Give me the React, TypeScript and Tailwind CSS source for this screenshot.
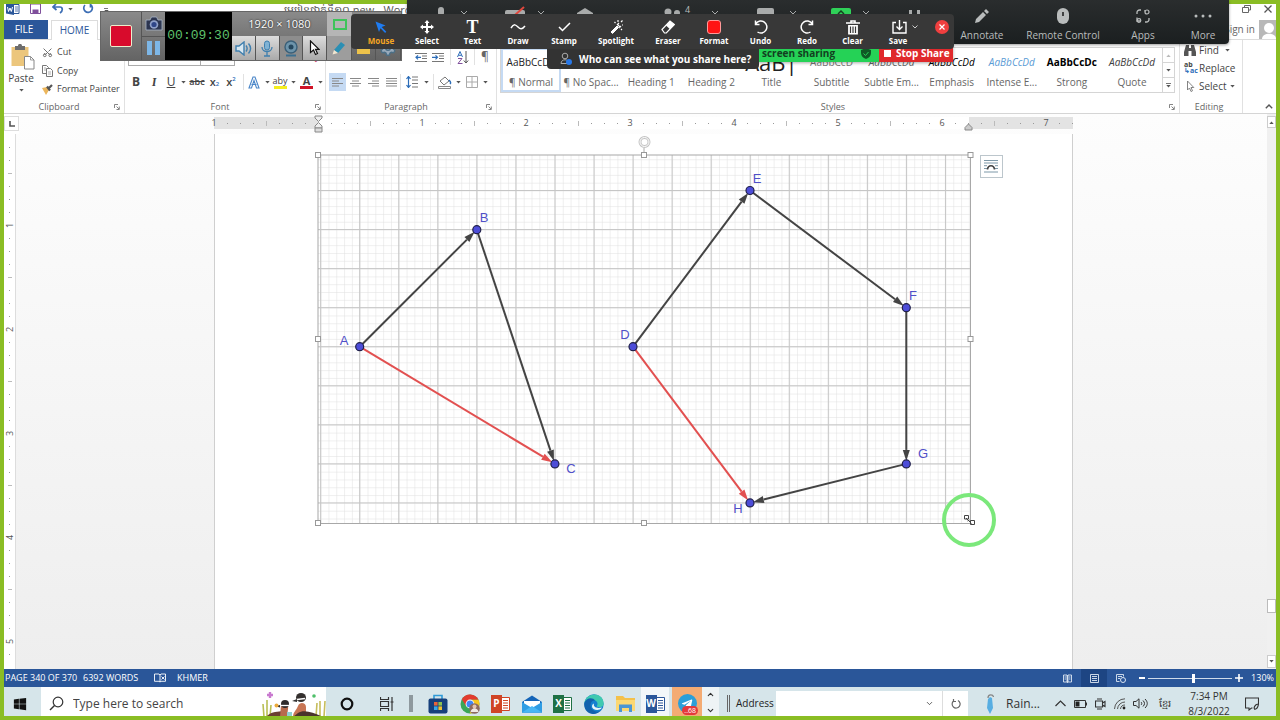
import React from "react";
import type { ReactNode } from "react";
import { FaWindows, FaTelegramPlane } from "react-icons/fa";
import { ChevronDown, ChevronUp, Scissors, Settings } from "lucide-react";

const cx = (...parts: (string | undefined)[]) => parts.filter(Boolean).join(" ");

function Icon({ w, h, vb, children, className }: { w: number; h: number; vb?: string; children: ReactNode; className?: string }) {
  return (
    <svg width={w} height={h} viewBox={vb ?? `0 0 ${w} ${h}`} fill="none" className={cx("shrink-0", className)} aria-hidden="true">
      {children}
    </svg>
  );
}

function Caret({ className }: { className?: string }) {
  return (
    <Icon w={5} h={3} className={className}>
      <path d="M0.3 0h4.4L2.5 2.6z" fill="#555" />
    </Icon>
  );
}

function Tool({ label, className, children }: { label: string; className: string; children: ReactNode }) {
  return (
    <button type="button" aria-label={label} className={cx("flex h-[18px] shrink-0 items-center justify-center", className)}>
      {children}
    </button>
  );
}

function Sep() {
  return <span className="h-4 w-px shrink-0 bg-[#e1e1e1]" />;
}

function Launcher({ label }: { label: string }) {
  return (
    <button type="button" aria-label={label} className="shrink-0">
      <Icon w={6} h={6}>
        <path d="M0.5 4V0.5H4M2.5 2.5l2.5 2.500M5.300 2.500v3H2.500" stroke="#777" strokeWidth="0.9" />
      </Icon>
    </button>
  );
}

function Group({ name, className, launcher, children }: { name: string; className: string; launcher?: boolean; children: ReactNode }) {
  return (
    <section className={cx("flex flex-col border-r border-[#e1e1e1] pt-1", className)}>
      <div className="h-0 flex-1">{children}</div>
      <div className="flex h-[13px] items-center pr-1 text-[9px] leading-[13px] text-[#666]">
        <span className="flex-1 text-center">{name}</span>
        {launcher && <Launcher label={`${name} settings`} />}
      </div>
    </section>
  );
}

/* ---------- Word window ---------- */

function TitleBar() {
  return (
    <header className="flex h-4 items-start overflow-hidden pl-[2px]">
      <Icon w={15} h={11}>
        <path d="M7 0.500h6v9H7z" fill="#fff" stroke="#2b579a" />
        <path d="M9 3h3M9 5h3M9 7h3" stroke="#2b579a" strokeWidth="0.8" />
        <path d="M0 0h8v11L0 9.500z" fill="#2b579a" />
        <path d="M1.500 3l1 4.500L4 4l1.300 3.500L6.500 3" stroke="#fff" strokeWidth="1" />
      </Icon>
      <button type="button" aria-label="Save" className="ml-[9px]">
        <Icon w={11} h={10}>
          <path d="M0.500 0h10v9.500h-10z" stroke="#80509c" />
          <path d="M2.500 5.500h6v4h-6z" fill="#80509c" />
        </Icon>
      </button>
      <button type="button" aria-label="Undo" className="ml-[11px] flex items-center gap-1">
        <Icon w={12} h={10}>
          <path d="M4 0L1 3l3.500 3M1.500 3H8c2.500 0 3.500 3.500 0 6" stroke="#3b6db4" strokeWidth="1.7" />
        </Icon>
        <Caret />
      </button>
      <button type="button" aria-label="Repeat" className="ml-[9px]">
        <Icon w={12} h={10}>
          <path d="M8.500 0.500A4.300 4.300 0 1 1 3 1M8.500 0v3.500" stroke="#3b6db4" strokeWidth="1.700" />
        </Icon>
      </button>
      <span className="ml-[10px] mt-1 flex flex-col gap-px">
        <span className="h-px w-1 bg-[#777]" />
        <Caret />
      </span>
      <h1 className="ml-[175px] shrink-0 text-[11px] leading-[12px] whitespace-nowrap text-[#555]">មេរៀនថ្នាក់ទី១០ new - Word</h1>
      <span className="flex-1" />
      <button type="button" aria-label="Restore" className="mr-[13px] mt-px">
        <Icon w={9} h={8}>
          <path d="M2.500 2V0.500h6v4.500H7M0.500 2.500h6v5h-6z" stroke="#666" />
        </Icon>
      </button>
      <button type="button" aria-label="Close" className="mr-[4px] mt-px">
        <Icon w={8} h={8}>
          <path d="M0.500 0.500l7 7M7.500 0.500l-7 7" stroke="#555" strokeWidth="1.300" />
        </Icon>
      </button>
    </header>
  );
}

function TabRow() {
  return (
    <nav className="flex h-5 items-stretch border-b border-[#dcdcdc] text-[10px]">
      <button type="button" className="w-[44px] bg-[#2b579a] pr-1 text-white">FILE</button>
      <button type="button" className="-mb-px ml-[3px] w-[47px] border-x border-t border-[#dcdcdc] bg-white text-[#2b579a]">HOME</button>
      <span className="flex-1" />
      <button type="button" className="mr-1 text-[#666]">Sign in</button>
      <Icon w={17} h={19}>
        <path d="M0 0h17v19H0z" fill="#b8b8b8" />
        <circle cx="10" cy="8" r="5" fill="#fff" />
        <path d="M3 19c0-7 14-7 14 0z" fill="#fff" />
      </Icon>
    </nav>
  );
}

function Clipboard() {
  return (
    <Group name="Clipboard" className="w-[121px] shrink-0" launcher>
      <div className="flex">
        <button type="button" className="flex w-[38px] flex-col items-center pr-1 text-[10px] leading-[14px] text-[#444]">
          <Icon w={24} h={26} className="mr-[-4px]">
            <path d="M0.500 3h17v19h-17z" fill="#ecc67c" />
            <path d="M4 2h3c0-3 4-3 4 0h3v4H4z" fill="#6d6d6d" />
            <path d="M13.500 12.500h6l3.500 3.500v9h-9.500z" fill="#fff" stroke="#888" />
            <path d="M19.500 12.500v3.500H23" stroke="#888" strokeWidth="0.800" />
          </Icon>
          <span className="mt-px">Paste</span>
          <Caret className="mt-[4px]" />
        </button>
        <div className="-mt-px flex flex-col text-[9px] text-[#444]">
          <button type="button" className="flex h-[18px] items-center gap-1">
            <Scissors size={11} color="#666" className="-rotate-90" />Cut
          </button>
          <button type="button" className="flex h-[19px] items-center gap-1">
            <Icon w={11} h={12}>
              <path d="M0.500 0.500h4l2 2v6h-6z" fill="#fff" stroke="#777" />
              <path d="M4.500 3.500h4l2 2v6h-6z" fill="#fff" stroke="#777" />
              <path d="M6 7h3M6 9h3M2 3h2M2 5h2" stroke="#999" strokeWidth="0.800" />
            </Icon>
            Copy
          </button>
          <button type="button" className="flex h-[18px] items-center gap-1 whitespace-nowrap">
            <Icon w={11} h={11}>
              <path d="M0 4l5-1 2 3-3 5z" fill="#ecb65c" />
              <path d="M5 2.500l3 4M7 4l3-3" stroke="#555" strokeWidth="2.200" />
            </Icon>
            Format Painter
          </button>
        </div>
      </div>
    </Group>
  );
}

function FontGroup() {
  return (
    <Group name="Font" className="w-[201px] shrink-0" launcher>
      <div className="mt-1 flex h-[18px] pl-[3px] text-[10px] text-[#444]">
        <select aria-label="Font name" className="w-[73px] appearance-none border border-[#ababab] bg-white pl-px leading-[14px]">
          <option>Khmer OS Siem</option>
        </select>
        <select aria-label="Font size" className="w-[34px] appearance-none border border-l-0 border-[#ababab] bg-white pl-1 leading-[14px]">
          <option>12</option>
        </select>
        <Tool label="Grow font" className="w-[18px]">A</Tool>
        <Tool label="Shrink font" className="w-[16px]">A</Tool>
        <span className="flex-1" />
        <Tool label="Clear formatting" className="w-[18px] text-[#c8466e]">◆</Tool>
      </div>
      <div className="mt-[7px] flex items-center pl-[2px] text-[12px] text-[#444]">
        <Tool label="Bold" className="w-[18px]"><b>B</b></Tool>
        <Tool label="Italic" className="w-[18px]"><i className="font-serif font-semibold">I</i></Tool>
        <Tool label="Underline" className="w-[16px]"><u>U</u></Tool>
        <Tool label="Underline style" className="w-[8px]"><Caret /></Tool>
        <Tool label="Strikethrough" className="w-[20px]"><s className="text-[9px] font-semibold">abc</s></Tool>
        <Tool label="Subscript" className="w-[15px] text-[11px] font-semibold">x<sub className="text-[6px] text-[#2b6cb8]">2</sub></Tool>
        <Tool label="Superscript" className="w-[18px] text-[11px] font-semibold">x<sup className="text-[6px] text-[#2b6cb8]">2</sup></Tool>
        <span className="w-[3px]" />
        <Sep />
        <Tool label="Text effects" className="w-[20px]">
          <Icon w={12} h={13}>
            <path d="M1 12L5 1h2l4 11H8.500L6 4.500 3.500 12zM3.500 8.500h5" stroke="#4a86c8" strokeWidth="1.100" />
          </Icon>
        </Tool>
        <Tool label="Text effect options" className="w-[6px]"><Caret /></Tool>
        <Tool label="Highlight" className="w-[20px]">
          <span className="flex flex-col items-center">
            <span className="text-[9px] leading-[10px]">aby</span>
            <span className="h-[3px] w-[13px] bg-[#f4ee1e]" />
          </span>
        </Tool>
        <Tool label="Highlight options" className="w-[7px]"><Caret /></Tool>
        <Tool label="Font colour" className="w-[19px]">
          <span className="flex flex-col items-center">
            <b className="text-[11px] leading-[10px]">A</b>
            <span className="h-[3px] w-[13px] bg-[#d01428]" />
          </span>
        </Tool>
        <Tool label="Font colour options" className="w-[8px]"><Caret /></Tool>
      </div>
    </Group>
  );
}

const alignPaths: { label: string; d: string }[] = [
  { label: "Align left", d: "M0 0.500h11M0 3h7M0 5.500h11M0 8h7" },
  { label: "Centre", d: "M0 0.500h11M2 3h7M0 5.500h11M2 8h7" },
  { label: "Align right", d: "M0 0.500h11M4 3h7M0 5.500h11M4 8h7" },
  { label: "Justify", d: "M0 0.500h11M0 3h11M0 5.500h11M0 8h11" },
];

function ParagraphGroup() {
  return (
    <Group name="Paragraph" className="w-[171px] shrink-0" launcher>
      <div className="mt-1 flex h-[18px] items-center pl-[86px]">
        <Tool label="Decrease indent" className="w-[17px]">
          <Icon w={12} h={9}>
            <path d="M0 0.500h12M7 3h5M7 5.500h5M0 8.500h12" stroke="#777" />
            <path d="M6 4.300H1M3 2.300l-2 2 2 2" stroke="#2b6cb8" strokeWidth="1.200" />
          </Icon>
        </Tool>
        <Tool label="Increase indent" className="w-[18px]">
          <Icon w={12} h={9}>
            <path d="M0 0.500h12M7 3h5M7 5.500h5M0 8.500h12" stroke="#777" />
            <path d="M0 4.300h5.500M3.500 2.300l2 2-2 2" stroke="#2b6cb8" strokeWidth="1.200" />
          </Icon>
        </Tool>
        <span className="w-[3px]" />
        <Sep />
        <Tool label="Sort" className="w-[23px]">
          <Icon w={12} h={13}>
            <path d="M0.500 6L3 0.500 5.500 6M1.500 4.300h3" stroke="#2b6cb8" />
            <path d="M1 7.500h4l-4 5h4.500" stroke="#80509c" />
            <path d="M9 0v12M6.800 9.500L9 12l2.200-2.500" stroke="#555" />
          </Icon>
        </Tool>
        <Sep />
        <Tool label="Show marks" className="w-[20px] text-[12px] text-[#666]">¶</Tool>
      </div>
      <div className="mt-[7px] flex items-center pl-[3px]">
        {alignPaths.map((a, i) => (
          <Tool key={a.label} label={a.label} className={i === 0 ? "w-[17px] bg-[#c5daf3]" : "w-[18px]"}>
            <Icon w={11} h={9}><path d={a.d} stroke="#888" /></Icon>
          </Tool>
        ))}
        <Sep />
        <Tool label="Line spacing" className="w-[22px]">
          <Icon w={12} h={12}>
            <path d="M6 1h6M6 4h6M6 7.500h6M6 11h6" stroke="#777" />
            <path d="M2.500 0.500v11M0.500 3l2-2.500 2 2.500M0.500 9l2 2.500 2-2.500" stroke="#2b6cb8" strokeWidth="1.200" />
          </Icon>
        </Tool>
        <Tool label="Line spacing options" className="w-[6px]"><Caret /></Tool>
        <span className="w-[4px]" />
        <Sep />
        <Tool label="Shading" className="w-[21px]">
          <Icon w={14} h={13}>
            <path d="M2 5l5-4 4 4-5 4z" stroke="#777" />
            <path d="M11 4c2 2 2 3 1 4" stroke="#2b6cb8" strokeWidth="1.500" />
            <path d="M0.500 10.500h12v2h-12z" stroke="#888" />
          </Icon>
        </Tool>
        <Tool label="Shading options" className="w-[6px]"><Caret /></Tool>
        <Tool label="Borders" className="w-[21px]">
          <Icon w={12} h={12}><path d="M0.500 0.500h11v11H0.500zM6 0.500v11M0.500 6h11" stroke="#aaa" /></Icon>
        </Tool>
        <Tool label="Border options" className="w-[6px]"><Caret /></Tool>
      </div>
    </Group>
  );
}

const styles: { name: string; sample?: string; cls?: string }[] = [
  { name: "¶ Normal", sample: "AaBbCcDd", cls: "text-[10px] text-[#222]" },
  { name: "¶ No Spac..." },
  { name: "Heading 1" },
  { name: "Heading 2" },
  { name: "Title", sample: "AaB|", cls: "text-[22px] text-[#222]" },
  { name: "Subtitle", sample: "AaBbCcD", cls: "text-[10px] text-[#777]" },
  { name: "Subtle Em...", sample: "AaBbCcDd", cls: "text-[10px] italic text-[#666]" },
  { name: "Emphasis", sample: "AaBbCcDd", cls: "text-[10px] italic" },
  { name: "Intense E...", sample: "AaBbCcDd", cls: "text-[10px] italic text-[#5b9bd5]" },
  { name: "Strong", sample: "AaBbCcDc", cls: "text-[10px] font-bold" },
  { name: "Quote", sample: "AaBbCcDd", cls: "text-[10px] italic text-[#404040]" },
];

function StylesGroup() {
  return (
    <Group name="Styles" className="min-w-0 flex-1" launcher>
      <div className="ml-[3px] mr-1 mt-[3px] flex h-[46px] border border-[#d5d5d5]">
        {styles.map((s, i) => (
          <button
            key={s.name}
            type="button"
            className={cx(
              "flex min-w-0 flex-1 flex-col items-center border-2 whitespace-nowrap",
              i === 0 ? "border-[#c5daf3]" : "border-transparent",
            )}
          >
            <span className={cx("flex h-[24px] items-center leading-[20px]", s.cls)}>{s.sample}</span>
            <span className="text-[10px] leading-[16px] text-[#666]">{s.name}</span>
          </button>
        ))}
        <div className="flex w-[12px] flex-col divide-y divide-[#d5d5d5] border-l border-[#d5d5d5]">
          <button type="button" aria-label="Previous styles" className="flex flex-1 items-center justify-center"><Caret className="rotate-180 opacity-40" /></button>
          <button type="button" aria-label="Next styles" className="flex flex-1 items-center justify-center"><Caret /></button>
          <button type="button" aria-label="More styles" className="flex flex-1 flex-col items-center justify-center gap-px"><span className="h-px w-[5px] bg-[#777]" /><Caret /></button>
        </div>
      </div>
    </Group>
  );
}

function EditingGroup() {
  return (
    <Group name="Editing" className="w-[63px] shrink-0">
      <div className="flex flex-col pl-1 text-[10px] text-[#444]">
        <button type="button" className="flex h-[13px] items-center gap-[3px]">
          <Icon w={12} h={11}>
            <path d="M2 0h3v3h2V0h3l2 7v4H7.500V6h-3v5H0V7z" fill="#555" />
          </Icon>
          Find <Caret className="ml-[3px]" />
        </button>
        <button type="button" className="mt-[2px] flex h-[18px] items-center gap-[3px]">
          <span className="flex w-[12px] flex-col text-left text-[7px] leading-[6px] font-bold">
            <span>ab</span>
            <span className="text-[#2b6cb8]">↳ac</span>
          </span>
          Replace
        </button>
        <button type="button" className="flex h-[18px] items-center gap-[3px]">
          <Icon w={12} h={12}><path d="M3.500 1v9l2-2 1.500 3.500 1.500-0.700L7 7.500h2.800z" stroke="#777" strokeWidth="0.900" /></Icon>
          Select <Caret />
        </button>
      </div>
    </Group>
  );
}

function Ribbon() {
  return (
    <div className="flex h-[74px] border-b border-[#d5d5d5]">
      <Clipboard />
      <FontGroup />
      <ParagraphGroup />
      <StylesGroup />
      <EditingGroup />
      <div className="flex w-[33px] shrink-0 items-end justify-end pb-[4px] pr-[3px]">
        <button type="button" aria-label="Collapse ribbon" className="flex">
          <Icon w={8} h={5}><path d="M0.800 4.200L4 1l3.200 3.200" stroke="#555" strokeWidth="1.400" /></Icon>
        </button>
      </div>
    </div>
  );
}

function HorizontalRuler() {
  const marks = Array.from({ length: 67 }, (_, i) => i - 8);
  return (
    <div className="relative flex h-[12px] w-[859px] shrink-0 bg-white">
      <div className="w-[104px] bg-[#e3e3e3]" />
      <div className="flex-1" />
      <div className="w-[104px] bg-[#e3e3e3]" />
      <div className="absolute inset-y-0 -left-[6px] flex items-center text-[9px] text-[#555]">
        {marks.map((k) => (
          <span key={k} className="flex w-[13px] justify-center">
            {k === 0 ? null : k % 8 === 0 ? Math.abs(k / 8) : <span className={k % 4 === 0 ? "h-[5px] w-px bg-[#bbb]" : "h-px w-px bg-[#999]"} />}
          </span>
        ))}
      </div>
      <Icon w={9} h={20} className="absolute left-[100px] -top-[2px]">
        <path d="M1 1h7v2L4.500 6.500 1 3z" fill="#eee" stroke="#888" />
        <path d="M1 13v-2l3.500-3.500L8 11v2z" fill="#eee" stroke="#888" />
        <path d="M1 13h7v4H1z" fill="#ddd" stroke="#888" />
      </Icon>
      <Icon w={9} h={8} className="absolute right-[100px] top-[6px]">
        <path d="M1 7V4.500L4.500 1 8 4.500V7z" fill="#ccc" stroke="#888" />
      </Icon>
    </div>
  );
}

function VerticalRuler() {
  const marks = Array.from({ length: 40 }, (_, i) => i + 2);
  return (
    <div className="flex w-[12px] flex-col items-center border-r border-[#ddd] bg-white pt-[7px] text-[9px] leading-[11px] text-[#555]">
      {marks.map((k) => (
        <span key={k} className="flex h-[13px] shrink-0 items-center">
          {k % 8 === 0 ? <span className="-rotate-90">{k / 8}</span> : <span className={k % 4 === 0 ? "h-px w-[4px] bg-[#bbb]" : "h-px w-px bg-[#999]"} />}
        </span>
      ))}
    </div>
  );
}

type Pt = { id: string; x: number; y: number; lx: number; ly: number };
const points: Record<string, Pt> = {
  A: { id: "A", x: 358.700, y: 346.700, lx: 343, ly: 344.500 },
  B: { id: "B", x: 475.800, y: 229.700, lx: 483, ly: 221.500 },
  C: { id: "C", x: 553.900, y: 463.900, lx: 570, ly: 472.500 },
  D: { id: "D", x: 632, y: 346.700, lx: 624, ly: 338.500 },
  E: { id: "E", x: 749, y: 190.500, lx: 756, ly: 182.500 },
  F: { id: "F", x: 905.300, y: 307.700, lx: 912, ly: 299.500 },
  G: { id: "G", x: 905.300, y: 463.900, lx: 922, ly: 457.500 },
  H: { id: "H", x: 749, y: 502.900, lx: 737, ly: 512.500 },
};
const vectors: [string, string, string][] = [
  ["A", "B", "#444"],
  ["B", "C", "#444"],
  ["A", "C", "#e25050"],
  ["D", "E", "#444"],
  ["E", "F", "#444"],
  ["F", "G", "#444"],
  ["G", "H", "#444"],
  ["D", "H", "#e25050"],
];

function VectorFigure() {
  const handles: [number, number][] = [
    [317, 155], [643, 155], [969.500, 155], [317, 339], [969.500, 339], [317, 523], [643, 523],
  ];
  return (
    <svg width="665" height="396" viewBox="311 134 665 396" className="shrink-0" role="img" aria-label="Vector polygons">
      <defs>
        <pattern id="minor" x="358.700" y="346.700" width="7.810" height="7.810" patternUnits="userSpaceOnUse">
          <path d="M0 0H7.810M0 0V7.810" stroke="#dfdfdf" strokeWidth="1" fill="none" />
        </pattern>
      </defs>
      <rect x="317" y="155" width="652.500" height="368.500" fill="#fff" />
      <rect x="317" y="155" width="652.500" height="368.500" fill="url(#minor)" />
      {Array.from({ length: 17 }, (_, i) => (
        <path key={`v${i}`} d={`M${319.650 + i * 39.050} 155V523`} stroke="#c6c6c6" />
      ))}
      {Array.from({ length: 9 }, (_, i) => (
        <path key={`h${i}`} d={`M317 ${190.500 + i * 39.050}H969`} stroke="#c6c6c6" />
      ))}
      <rect x="317" y="155" width="652.500" height="368.500" fill="none" stroke="#a8a8a8" />
      {vectors.map(([from, to, color]) => {
        const a = points[from];
        const b = points[to];
        const len = Math.hypot(b.x - a.x, b.y - a.y);
        const ux = (b.x - a.x) / len;
        const uy = (b.y - a.y) / len;
        const tx = b.x - ux * 3;
        const ty = b.y - uy * 3;
        const bx = tx - ux * 11;
        const by = ty - uy * 11;
        return (
          <g key={from + to}>
            <path d={`M${a.x} ${a.y}L${bx} ${by}`} stroke={color} strokeWidth="2" />
            <path d={`M${tx} ${ty}L${bx - uy * 3.500} ${by + ux * 3.500}L${bx + uy * 3.500} ${by - ux * 3.500}Z`} fill={color} />
          </g>
        );
      })}
      {Object.values(points).map((p) => (
        <g key={p.id}>
          <circle cx={p.x} cy={p.y} r="4" fill="#4d4dd8" stroke="#20204a" strokeWidth="1.200" />
          <text x={p.lx} y={p.ly} textAnchor="middle" fontSize="13" fill="#5050c8" className="font-['Liberation_Sans',sans-serif]">{p.id}</text>
        </g>
      ))}
      <circle cx="643.500" cy="142" r="4.500" fill="none" stroke="#c4c4c4" strokeWidth="3" />
      <circle cx="643.500" cy="142" r="4.500" fill="none" stroke="#fff" strokeWidth="1" />
      <path d="M643 148v5" stroke="#aaa" />
      {handles.map(([x, y]) => (
        <rect key={`${x}-${y}`} x={x - 2.500} y={y - 2.500} width="5" height="5" fill="#fff" stroke="#999" />
      ))}
    </svg>
  );
}

function DocumentArea() {
  return (
    <main className="flex min-h-0 flex-1 bg-linear-to-b from-[#fdfdfd] to-[#eeeeee]">
      <div className="flex flex-col">
        <div className="flex h-[20px] shrink-0 items-start bg-white pt-[2px]">
          <button type="button" aria-label="Tab stop" className="flex h-[15px] w-[15px] items-center justify-center border border-[#ddd] bg-white">
            <Icon w={6} h={6}><path d="M1 0v5h5" stroke="#555" strokeWidth="1.600" /></Icon>
          </button>
        </div>
        <div className="flex h-0 flex-1 overflow-hidden">
          <VerticalRuler />
        </div>
      </div>
      <div className="flex min-w-0 flex-1 flex-col">
        <div className="flex h-[20px] justify-center pt-[3px]">
          <HorizontalRuler />
        </div>
        <div className="flex flex-1 justify-center">
          <div className="relative flex w-[859px] shrink-0 items-start border-x border-[#cfcfcf] bg-white pl-[97px]">
            <VectorFigure />
            <button type="button" aria-label="Layout options" className="ml-[3px] mt-[21px] flex h-[23px] w-[23px] shrink-0 items-center justify-center border border-[#bcc6cc] bg-white">
              <Icon w={14} h={13}>
                <path d="M0 0.500h14M0 3h14M0 8.500h3M11 8.500h3M0 5.700h3M11 5.700h3M0 12h14" stroke="#7d98a8" />
                <path d="M3.500 9.500c0.500-5 6.500-5 7 0" stroke="#444" strokeWidth="1.700" />
              </Icon>
            </button>
            <div className="pointer-events-none absolute left-[727px] top-[359px]">
              <Icon w={54} h={54}>
                <circle cx="27" cy="27" r="25" stroke="#7be87b" strokeWidth="4" />
                <path d="M22.500 22.500h4v3.500h-4zM28.500 27.500h4v4h-4zM24 25l5.500 5.500M25.500 28l2-1" stroke="#444" />
              </Icon>
            </div>
          </div>
        </div>
      </div>
      <div className="flex w-[9px] flex-col items-center bg-[#f0f0f0] pt-[2px]">
        <button type="button" aria-label="Scroll up" className="flex h-[12px] w-full items-center justify-center border border-[#ccc] bg-white"><Caret className="rotate-180" /></button>
        <span className="flex-1" />
        <span className="h-[14px] w-full border border-[#bbb] bg-white" />
        <span className="h-[42px]" />
        <button type="button" aria-label="Scroll down" className="mb-px flex h-[13px] w-full items-center justify-center border border-[#ccc] bg-white"><Caret /></button>
      </div>
    </main>
  );
}

function StatusBar() {
  return (
    <footer className="flex h-[18px] shrink-0 items-center bg-[#2a5699] text-[9px] text-white">
      <span className="w-[79px] pl-px whitespace-nowrap">PAGE 340 OF 370</span>
      <span className="w-[71px] whitespace-nowrap">6392 WORDS</span>
      <Icon w={12} h={10}>
        <path d="M0.500 1h4.500l1 1v7l-1-0.700H0.500zM6 2l1-1h4.500v7.300H7L6 9M7.500 3.500l3 3M10.500 3.500l-3 3" stroke="#fff" strokeWidth="0.900" />
      </Icon>
      <span className="ml-[11px]">KHMER</span>
      <span className="flex-1" />
      <button type="button" aria-label="Read mode" className="flex w-[28px] justify-center">
        <Icon w={9} h={9}><path d="M0.500 1H4v7H0.500zM5 1h3.500v7H5zM4.500 1v8M1.500 3h1.500M1.500 5h1.500M6 3h1.500M6 5h1.500" stroke="#dce6f2" strokeWidth="0.900" /></Icon>
      </button>
      <button type="button" aria-label="Print layout" className="flex h-full w-[26px] items-center justify-center bg-[#1d4583]">
        <Icon w={9} h={9}><path d="M0.500 0.500h8v8h-8zM2 2.500h5M2 4.500h5M2 6.500h5" stroke="#dce6f2" strokeWidth="0.900" /></Icon>
      </button>
      <button type="button" aria-label="Web layout" className="flex w-[27px] justify-center">
        <Icon w={10} h={9}><path d="M0.500 0.500h7v2M0.500 0.500v7h3M2 2.500h4M2 4.500h2" stroke="#dce6f2" strokeWidth="0.900" /><circle cx="7" cy="6" r="2.500" stroke="#dce6f2" /></Icon>
      </button>
      <button type="button" aria-label="Zoom out" className="ml-[3px] flex w-[9px] justify-center"><span className="h-[2px] w-[6px] bg-white" /></button>
      <input
        type="range"
        aria-label="Zoom"
        min={0}
        max={100}
        defaultValue={54}
        className="mx-[2px] h-[10px] w-[84px] appearance-none bg-[linear-gradient(#cfdbea,#cfdbea)] bg-[length:100%_1px] bg-center bg-no-repeat [&::-webkit-slider-thumb]:h-[9px] [&::-webkit-slider-thumb]:w-[3px] [&::-webkit-slider-thumb]:appearance-none [&::-webkit-slider-thumb]:bg-white"
      />
      <button type="button" aria-label="Zoom in" className="flex w-[9px] justify-center">
        <Icon w={8} h={8}><path d="M0 4h8M4 0v8" stroke="#fff" strokeWidth="1.600" /></Icon>
      </button>
      <span className="w-[33px] pr-[2px] text-right">130%</span>
    </footer>
  );
}

/* ---------- Taskbar ---------- */

function AppButton({ label, className, children }: { label: string; className?: string; children: ReactNode }) {
  return (
    <button type="button" aria-label={label} className={cx("flex h-full shrink-0 items-center justify-center", className)}>
      {children}
    </button>
  );
}

function OfficeIcon({ letter, color }: { letter: "P" | "X" | "W"; color: string }) {
  return (
    <span className="flex items-center">
      <span className="flex h-[18px] w-[11px] items-center justify-center text-[10px] font-bold text-white" style={{ background: color }}>{letter}</span>
      <Icon w={8} h={14}>
        <path d="M0 0.500h7.500v13H0" fill="#fff" stroke={color} />
        <path d="M1 3.500h5M1 6h5M1 8.500h5M1 11h5" stroke={color} strokeWidth="1.200" />
      </Icon>
    </span>
  );
}

function Ducks() {
  return (
    <Icon w={64} h={26}>
      <path d="M2 26l-1-13M5 26V9M8 26l1-12" stroke="#b9bf55" strokeWidth="1.600" />
      <path d="M54 26l1-14M58 26V10M62 26l1-16" stroke="#c6bd5c" strokeWidth="1.600" />
      <path d="M4 26c5-6 12-5 17-6l3 6z" fill="#6a4030" />
      <path d="M19 14c4-2 8 0 7 4l-1 8h-7z" fill="#b86b4c" />
      <circle cx="23" cy="13" r="4" fill="#2e2b2b" />
      <path d="M19 14.500h8" stroke="#fff" strokeWidth="1.300" />
      <path d="M18 14l-5 1 5 1.500z" fill="#333" />
      <path d="M31 26c0-5 3-6 5-11 2-5 8-3 8 1v10z" fill="#c87554" />
      <path d="M36 22c6-4 17 0 25 4H31z" fill="#4a342c" />
      <ellipse cx="39" cy="6.500" rx="5" ry="4.500" fill="#34302e" />
      <path d="M35 8.500l8-1" stroke="#fff" strokeWidth="1.500" />
      <path d="M35 8l-5 2 5 1z" fill="#333" />
      <path d="M25 21h5v5h-5z" fill="#8ed0cf" />
      <path d="M8 1v6M5 4h6" stroke="#c97ad0" strokeWidth="2.400" />
      <circle cx="14.500" cy="14.500" r="2" fill="#eba93c" />
      <circle cx="52" cy="5" r="1.800" fill="#4fc06a" />
    </Icon>
  );
}

function Taskbar() {
  return (
    <div className="h-[29px] shrink-0 overflow-hidden bg-[#d6e5ea]">
      <div className="flex h-[33px] items-stretch text-[#333]">
        <AppButton label="Start" className="w-[37px] pr-[5px]"><FaWindows size={14} color="#111" /></AppButton>
        <label className="flex w-[285px] items-center bg-white pl-2">
          <Icon w={15} h={15}><circle cx="9" cy="6" r="4.800" stroke="#333" strokeWidth="1.200" /><path d="M5.500 9.500L1 14" stroke="#333" strokeWidth="1.400" /></Icon>
          <input aria-label="Search" placeholder="Type here to search" className="ml-[9px] w-0 min-w-0 flex-1 bg-transparent text-[12px] outline-none placeholder:text-[#444]" />
          <Ducks />
        </label>
        <AppButton label="Cortana" className="w-[42px]">
          <Icon w={14} h={14}><circle cx="7" cy="7" r="5.300" stroke="#111" strokeWidth="2.200" /></Icon>
        </AppButton>
        <AppButton label="Task view" className="w-[37px]">
          <Icon w={14} h={14}><path d="M0.500 0v2.500h8V0M0.500 14v-2.500h8V14M0.500 4.500h8v5h-8zM12 0v14M10.500 5h3" stroke="#333" strokeWidth="1.200" /></Icon>
        </AppButton>
        <span className="mx-1 h-[17px] w-[4px] self-center bg-[#8e999e]" />
        <AppButton label="Store" className="ml-[5px] w-[32px]">
          <Icon w={20} h={20}>
            <path d="M6 5V1.500h8V5" stroke="#2f9ad8" strokeWidth="1.600" />
            <rect x="0.500" y="4.500" width="19" height="15" rx="2" fill="#17407c" />
            <path d="M6 8h3.600v3.600H6z" fill="#e8653a" /><path d="M10.400 8H14v3.600h-3.600z" fill="#8cc152" />
            <path d="M6 12.400h3.600V16H6z" fill="#38a7e8" /><path d="M10.400 12.400H14V16h-3.600z" fill="#f2c230" />
          </Icon>
        </AppButton>
        <AppButton label="Chrome" className="w-[31px]">
          <Icon w={20} h={20}>
            <circle cx="10" cy="10" r="9.500" fill="#3aa757" />
            <path d="M1.800 5.200A9.500 9.500 0 0 1 18.500 5.800H10L6 12z" fill="#e33b2e" />
            <path d="M18.500 5.800A9.500 9.500 0 0 1 9.500 19.500L14 12l-2-6.200z" fill="#f8c51c" />
            <circle cx="10" cy="10" r="4.400" fill="#fff" /><circle cx="10" cy="10" r="3.500" fill="#4285f4" />
            <circle cx="14.500" cy="14.500" r="5.300" fill="#8c6a60" /><circle cx="14.500" cy="12.500" r="2" fill="#e2c5b4" /><path d="M10.500 18c1-5 7-5 8 0z" fill="#f0e8e4" />
          </Icon>
        </AppButton>
        <AppButton label="PowerPoint" className="w-[31px]"><OfficeIcon letter="P" color="#d04526" /></AppButton>
        <AppButton label="Mail" className="w-[31px]">
          <Icon w={20} h={18}>
            <path d="M0 7l10-6.500L20 7v10.500H0z" fill="#1565b8" />
            <path d="M2 6h16v6H2z" fill="#fff" />
            <path d="M0 7l10 6 10-6v10.500H0z" fill="#2f9de4" /><path d="M0 17.500l10-6.500 10 6.500z" fill="#48b6f4" />
          </Icon>
        </AppButton>
        <AppButton label="Excel" className="w-[31px]"><OfficeIcon letter="X" color="#1f7145" /></AppButton>
        <AppButton label="Edge" className="w-[32px]">
          <Icon w={20} h={20}>
            <circle cx="10" cy="10" r="9.700" fill="#1580cf" />
            <path d="M0.300 9C2-2.500 19.500-2.500 19.700 9.500c0 4-5 4.500-7 3 3-5-3-8.500-7-6C3 8 1 9 0.300 9z" fill="#3fc9b0" />
            <path d="M0.300 9C2 3.500 9 3 11 6.500c-5 0-6 6-2 9.500 3 2.500 6 2 8.500 0C10 24-1 19 0.300 9z" fill="#1262ad" />
            <path d="M10 9.500c-1 3 2 5.500 8 4-2 3-6 3-8.500 1.500-2-1.500-2-4.500 0.500-5.500z" fill="#e8f5fa" />
          </Icon>
        </AppButton>
        <AppButton label="File Explorer" className="w-[31px]">
          <Icon w={19} h={17}>
            <path d="M0 1h7l2 2h10v13H0z" fill="#f4c14a" /><path d="M0 5h19v11H0z" fill="#fbd873" />
            <path d="M3 17V9.500h13V17h-3v-4H6v4z" fill="#4a96d4" />
          </Icon>
        </AppButton>
        <AppButton label="Word" className="w-[28px] bg-[#f2f7f9]"><OfficeIcon letter="W" color="#2b579a" /></AppButton>
        <AppButton label="Telegram" className="relative ml-[3px] w-[30px] bg-[#f4ab73]">
          <span className="flex h-[19px] w-[19px] items-center justify-center rounded-full bg-[#2b9fd9]"><FaTelegramPlane size={12} color="#fff" /></span>
          <span className="absolute bottom-[5px] right-1 rounded-full bg-[#e5393b] px-[2px] text-[7px] leading-[9px] text-white">..68</span>
        </AppButton>
        <div className="flex w-[17px] flex-col items-center justify-between bg-[#eef3f5] pt-[3px] pb-[5px]">
          <button type="button" aria-label="Previous apps"><ChevronUp size={9} strokeWidth={3} /></button>
          <button type="button" aria-label="Next apps"><ChevronDown size={9} strokeWidth={3} /></button>
        </div>
        <span className="ml-[8px] h-[17px] w-[3px] self-center border-x border-[#666]" />
        <label htmlFor="address" className="ml-[6px] w-[40px] self-center text-[10px] text-[#222]">Address</label>
        <div className="mt-1 flex w-[192px] items-center bg-white">
          <input id="address" className="w-0 min-w-0 flex-1 bg-transparent outline-none" />
          <button type="button" aria-label="Address history" className="flex h-full w-[26px] items-center justify-center border-r border-[#ddd] pb-1"><ChevronDown size={9} /></button>
          <button type="button" aria-label="Refresh" className="flex h-full w-[25px] items-center justify-center pb-1">
            <Icon w={10} h={10}><path d="M7 1.500A4 4 0 1 1 2.500 2M2.500 0v2.500H5" stroke="#666" strokeWidth="1.200" /></Icon>
          </button>
        </div>
        <span className="flex-1" />
        <button type="button" className="flex items-center gap-[12px] text-[12px]">
          <Icon w={8} h={20}>
            <path d="M4 3v17l3-6-1-10zM4 3v17L1 14 2 5z" fill="#58aee2" />
            <path d="M2 4c0-4 5-4 5.500-1" stroke="#888" strokeWidth="1.300" />
          </Icon>
          Rain...
        </button>
        <div className="ml-[10px] flex items-center">
          <button type="button" aria-label="Hidden icons" className="flex w-[20px] justify-center"><Icon w={11} h={7}><path d="M0.500 6l5-5 5 5" stroke="#333" strokeWidth="1.200" /></Icon></button>
          <button type="button" aria-label="Battery" className="flex w-[20px] justify-center"><Icon w={13} h={8}><path d="M0.500 0.500h11v7H0.500zM12.500 2.500v3" stroke="#333" /><path d="M1.500 1.500h4v5h-4z" fill="#222" /></Icon></button>
          <button type="button" aria-label="Meet now" className="flex w-[20px] justify-center"><Icon w={11} h={12}><path d="M2 1h5M2 11h5M0.500 3h7v6h-7zM7.500 5l2.500-1.500v5L7.500 7" stroke="#333" strokeWidth="1.100" /></Icon></button>
          <button type="button" aria-label="Network" className="flex w-[20px] justify-center"><Icon w={12} h={12}><path d="M0.500 11A10.500 10.500 0 0 1 11 0.800M3.500 11A7.500 7.500 0 0 1 11 4M6.500 11A4.500 4.500 0 0 1 11 7" stroke="#555" /><circle cx="10" cy="10" r="1.400" fill="#222" /></Icon></button>
          <button type="button" aria-label="Volume" className="flex w-[20px] justify-center"><Icon w={15} h={11}><path d="M0.500 3.500H3L6 0.800v9.400L3 7.500H0.500zM8 4c1 1 1 2 0 3M10 2.500c2 2 2 4 0 6M12 1c3 3 3 6 0 9" stroke="#333" /></Icon></button>
          <button type="button" className="w-[30px] text-center text-[10px]">ខ្មែរ</button>
        </div>
        <button type="button" className="ml-[3px] w-[52px] text-center text-[10px] leading-[15px]">7:34 PM<br />8/3/2022</button>
        <AppButton label="Notifications" className="ml-[4px] w-[37px] pr-3">
          <Icon w={14} h={14}><path d="M13.500 6V1H0.500v10H4v2l2.500-2h1M13.500 6c0 4-2 6-4 6.500M10 12.500c-2-1.500 0-5 3-5.500" stroke="#333" strokeWidth="1.100" /></Icon>
        </AppButton>
      </div>
    </div>
  );
}

/* ---------- Floating toolbars ---------- */

function Recorder() {
  const cell = "flex items-center justify-center border-r border-[#555] h-full flex-1";
  return (
    <div className="absolute left-[100px] top-[11px] flex h-[50px] border border-[#666] bg-linear-to-b from-[#8a8a8a] to-[#646464]">
      <button type="button" aria-label="Stop recording" className="flex w-[41px] items-center justify-center border-r border-[#555]">
        <span className="h-[22px] w-[22px] rounded-[2px] border border-[#eec] bg-[#d80b2c]" />
      </button>
      <div className="flex w-[23px] flex-col">
        <button type="button" aria-label="Snapshot" className="flex flex-1 items-center justify-center border-b border-[#555]">
          <Icon w={18} h={15}>
            <path d="M1 4h4l1.500-3h5L13 4h4v10H1z" fill="#2c3550" stroke="#aab6c8" strokeWidth="0.800" />
            <circle cx="9" cy="8.500" r="4.300" fill="#8fa0c8" /><circle cx="9" cy="8.500" r="2.600" fill="#2f4688" />
          </Icon>
        </button>
        <button type="button" aria-label="Pause" className="flex flex-1 items-center justify-center gap-[3px]">
          <span className="h-[14px] w-[5px] bg-[#7db6e6]" />
          <span className="h-[14px] w-[5px] bg-[#7db6e6]" />
        </button>
      </div>
      <div className="flex w-[67px] items-center justify-center bg-black font-['Liberation_Mono',monospace] text-[13px] text-[#5fc26d]">00:09:30</div>
      <div className="flex w-[95px] flex-col">
        <div className="flex h-[24px] items-center justify-center text-[11px] text-white [text-shadow:0_0_2px_#000]">1920 × 1080</div>
        <div className="flex h-[24px] bg-linear-to-b from-[#ddd] to-[#aaa]">
          <button type="button" aria-label="Speaker" className={cell}><Icon w={17} h={15}><path d="M1 5h3l5-4v13L4 10H1z" stroke="#3f7fae" strokeWidth="1.400" fill="#d8e8f2" /><path d="M11 4.500c1.500 2 1.500 4 0 6M13.500 2.500c2.500 3 2.500 7 0 10" stroke="#3f7fae" strokeWidth="1.400" /></Icon></button>
          <button type="button" aria-label="Microphone" className={cell}><Icon w={12} h={17}><rect x="3.500" y="1" width="5" height="9" rx="2.500" fill="#7fb2d4" stroke="#3f7fae" /><path d="M1 7c0 6 10 6 10 0M6 12v4M3 16h6" stroke="#3f7fae" strokeWidth="1.300" /></Icon></button>
          <button type="button" aria-label="Webcam" className={cx(cell, "bg-[#8d8d8d]")}><Icon w={16} h={17}><circle cx="8" cy="7" r="6" fill="#6d94ab" stroke="#3a5f78" strokeWidth="1.400" /><circle cx="8" cy="7" r="2.500" fill="#24475e" /><path d="M3 15.500h10" stroke="#3a6f90" strokeWidth="2" /></Icon></button>
          <button type="button" aria-label="Pointer" className={cell}><Icon w={11} h={16}><path d="M1.500 1v11.500l3-2.500 2 4.500 2-1-2-4.200h3.500z" fill="#fff" stroke="#111" strokeWidth="1.200" /></Icon></button>
        </div>
      </div>
      <div className="flex w-[74px] flex-col">
        <button type="button" aria-label="Capture area" className="flex h-[24px] w-[25px] items-center justify-center bg-[#b5b5b5]"><span className="h-[11px] w-[14px] border-2 border-[#3ec45a]" /></button>
        <div className="flex h-[24px]">
          <button type="button" aria-label="Pencil" className={cx(cell, "bg-[#9d9d9d]")}><Icon w={16} h={16}><path d="M3 10l7-8 4 3-7 8z" fill="#2a8fb4" /><path d="M3 10l-1.500 4.500L7 13z" fill="#f0e6d0" /></Icon></button>
          <button type="button" aria-label="Folder" className={cell}><Icon w={16} h={14}><path d="M1 1h6l1 2h6v10H1z" fill="#edc24a" /></Icon></button>
          <button type="button" aria-label="Settings" className={cell}><Settings size={18} color="#4c6f86" fill="#9ab" /></button>
        </div>
      </div>
    </div>
  );
}

function MeetingBar() {
  const item = "flex flex-col items-center justify-center gap-[4px] pt-[6px]";
  return (
    <div className="absolute left-[407px] right-[51px] top-0 flex h-[44px] rounded-br-[4px] bg-linear-to-b from-[#2a2d2e] to-[#1b1f20] text-[10px] text-[#b9bcbc] shadow-[0_1px_3px_#0006]">
      <Icon w={540} h={16} className="mr-auto">
        <g fill="#a9abab">
          <rect x="31" y="7" width="6" height="9" rx="3" />
          <rect x="98" y="10" width="20" height="6" rx="2" />
          <path d="M170 13l8-5 8 5v3h-16z" />
          <circle cx="261" cy="12" r="3.500" /><circle cx="270" cy="13" r="3" />
          <rect x="350" y="8" width="17" height="8" rx="2" />
          <rect x="502" y="10" width="3" height="6" /><rect x="510" y="10" width="3" height="6" />
        </g>
        <rect x="424" y="8" width="20" height="8" rx="2" fill="#2fd158" />
        <path d="M431 14l3-3 3 3" stroke="#14401f" strokeWidth="1.500" />
        <path d="M108 15l9-8" stroke="#e0483e" strokeWidth="2" />
        <path d="M54 11l3 3 3-3M131 11l3 3 3-3M305 11l3 3 3-3M383 11l3 3 3-3M456 11l3 3 3-3" stroke="#a9abab" />
        <text x="278" y="13" fontSize="9" fill="#b9bcbc">4</text>
      </Icon>
      <button type="button" className={cx(item, "w-[70px]")}>
        <Icon w={16} h={16}><path d="M1 15l1-4 7-7 3 3-7 7zM10 3l2-2 3 3-2 2z" fill="#b9bcbc" /></Icon>Annotate
      </button>
      <button type="button" className={cx(item, "w-[92px] whitespace-nowrap")}>
        <Icon w={12} h={16}><rect width="12" height="16" rx="6" fill="#b9bcbc" /><path d="M6 4v4" stroke="#222" strokeWidth="1.600" /></Icon>Remote Control
      </button>
      <button type="button" className={cx(item, "w-[68px]")}>
        <Icon w={14} h={16}><path d="M5 2H3.500A2.500 2.500 0 0 0 1 4.500V6M13 10v1.500A2.500 2.500 0 0 1 10.500 14H9M1 9.500V13h4M9 2v1.500" stroke="#b9bcbc" strokeWidth="1.300" /><circle cx="11" cy="4" r="2" stroke="#b9bcbc" strokeWidth="1.200" /><circle cx="3" cy="12.500" r="1.800" stroke="#b9bcbc" strokeWidth="1.200" /></Icon>Apps
      </button>
      <button type="button" className={cx(item, "w-[52px]")}>
        <Icon w={18} h={16}><circle cx="2" cy="8" r="1.500" fill="#b9bcbc" /><circle cx="9" cy="8" r="1.500" fill="#b9bcbc" /><circle cx="16" cy="8" r="1.500" fill="#b9bcbc" /></Icon>More
      </button>
    </div>
  );
}

function ShareBar() {
  return (
    <div className="absolute left-[740px] top-[44px] flex h-[18px] w-[213px] text-[10px] leading-[18px] font-bold shadow-[0_1px_3px_#0005]">
      <div className="flex w-[139px] items-center bg-[#25d256] pl-[22px] text-[#12401f]">
        <span className="whitespace-nowrap">screen sharing</span>
        <Icon w={10} h={11} className="ml-auto mr-2"><path d="M5 0l5 2v3c0 3-2 5-5 6-3-1-5-3-5-6V2z" fill="#0f5a25" /><path d="M2.500 5.500l2 2 3-3.500" stroke="#25d256" /></Icon>
      </div>
      <button type="button" className="flex flex-1 items-center gap-[5px] bg-[#e0292c] pl-[5px] whitespace-nowrap text-white">
        <span className="h-[7px] w-[7px] bg-white" />Stop Share
      </button>
    </div>
  );
}

const annotateTools: { label: string; w: string; icon: ReactNode }[] = [
  { label: "Mouse", w: "w-[46px]", icon: <Icon w={12} h={12}><path d="M0.500 0.500l10 4-3.800 1.600 4.600 4.600-1.200 1.200-4.600-4.600L4 11z" fill="#1f7cf2" /></Icon> },
  { label: "Select", w: "w-[46px]", icon: <Icon w={14} h={14}><path d="M7 0l2.500 3H8v3h3V4.500L14 7l-3 2.500V8H8v3h1.500L7 14l-2.500-3H6V8H3v1.500L0 7l3-2.500V6h3V3H4.500z" fill="#fff" /></Icon> },
  { label: "Text", w: "w-[45px]", icon: <span className="font-['Liberation_Serif',serif] text-[18px] leading-[14px] font-bold">T</span> },
  { label: "Draw", w: "w-[46px]", icon: <Icon w={16} h={8}><path d="M1 5c3-5 5-3 7-1s4 3 7-1" stroke="#fff" strokeWidth="1.500" /></Icon> },
  { label: "Stamp", w: "w-[46px]", icon: <Icon w={13} h={10}><path d="M1 5l3.500 3.500L12 1" stroke="#fff" strokeWidth="1.500" /></Icon> },
  { label: "Spotlight", w: "w-[58px]", icon: <Icon w={13} h={14}><path d="M1 12l6-6 1.500 1.500-6 6z" fill="#fff" stroke="#fff" /><path d="M7 5l2-2M9 8l2-2M7.500 4.500l2.500 2.500M8 0v2M12 5h1M11 2l1.500-1.500M4.500 2l1 1M11 9l1 1" stroke="#fff" strokeWidth="1.200" /></Icon> },
  { label: "Eraser", w: "w-[46px]", icon: <Icon w={14} h={14}><path d="M1 9.500L9 1l4.300 3.500-8 8.500H3.500z" stroke="#fff" strokeWidth="1.200" /><path d="M5 5.500L9 1l4.300 3.500-4.300 4.700z" fill="#fff" /></Icon> },
  { label: "Format", w: "w-[46px]", icon: <span className="h-[14px] w-[14px] rounded-[3px] border border-[#ff9a9a] bg-[#ff1414]" /> },
  { label: "Undo", w: "w-[47px]", icon: <Icon w={14} h={14}><path d="M2 3.500A6 6 0 1 1 3.500 12M1.500 0.500v4h4" stroke="#fff" strokeWidth="1.500" /></Icon> },
  { label: "Redo", w: "w-[46px]", icon: <Icon w={14} h={14}><path d="M12 3.500A6 6 0 1 0 10.500 12M12.500 0.500v4h-4" stroke="#fff" strokeWidth="1.500" /></Icon> },
  { label: "Clear", w: "w-[45px]", icon: <Icon w={14} h={15}><path d="M0 3h14M5 2.500V1h4v1.500" stroke="#fff" strokeWidth="1.600" /><path d="M1.500 4.500h11V15h-11zM4.500 6.500v6.500M7 6.500v6.500M9.500 6.500v6.500" fill="#fff" stroke="#383838" strokeWidth="1.200" /></Icon> },
  { label: "Save", w: "w-[46px]", icon: <span className="ml-[13px] flex items-center gap-[5px]"><Icon w={15} h={14}><path d="M4 2.500H1V13h13V2.500h-3M7.500 0v9M4.500 6.500l3 3 3-3" stroke="#fff" strokeWidth="1.400" /></Icon><Icon w={6} h={4}><path d="M0.500 0.500L3 3l2.500-2.500" stroke="#ccc" /></Icon></span> },
];

function AnnotateBar() {
  return (
    <div className="absolute left-[351px] top-[14px]">
      <div className="flex h-[35px] w-[603px] items-stretch rounded-[4px] bg-[#383838] pl-[7px] text-[8px] font-bold text-white">
        {annotateTools.map((t, i) => (
          <button key={t.label} type="button" className={cx("flex flex-col items-center gap-px pt-[5px]", t.w)}>
            <span className="flex h-[16px] items-center justify-center">{t.icon}</span>
            <span className={cx("leading-[10px]", i === 0 ? "text-[#f5a623]" : undefined)}>{t.label}</span>
          </button>
        ))}
        <button type="button" aria-label="Close annotation tools" className="flex flex-1 items-start justify-center pl-[9px] pt-[6px]">
          <Icon w={14} h={14}><circle cx="7" cy="7" r="7" fill="#f03f3f" /><path d="M4.500 4.500l5 5M9.500 4.500l-5 5" stroke="#fff" strokeWidth="1.200" /></Icon>
        </button>
      </div>
      <div className="ml-[196px] flex h-[20px] w-[212px] items-center rounded-b-[4px] bg-[#333] pl-[13px] text-[10px] font-bold text-white">
        <Icon w={13} h={14} className="mr-[6px]"><circle cx="5" cy="4" r="2.800" stroke="#aaa" /><path d="M1 11.500c0-5 8-5 8 0z" stroke="#aaa" /><circle cx="9" cy="10" r="3" fill="#2878e8" /></Icon>
        <span className="whitespace-nowrap">Who can see what you share here?</span>
      </div>
    </div>
  );
}

export default function App() {
  return (
    <div className="relative flex min-h-screen flex-col bg-[#8abd24] p-1 font-['Open_Sans','Noto_Sans',sans-serif]">
      <div className="flex flex-1 flex-col bg-white">
        <TitleBar />
        <TabRow />
        <Ribbon />
        <DocumentArea />
        <StatusBar />
        <Taskbar />
      </div>
      <Recorder />
      <MeetingBar />
      <ShareBar />
      <AnnotateBar />
    </div>
  );
}
